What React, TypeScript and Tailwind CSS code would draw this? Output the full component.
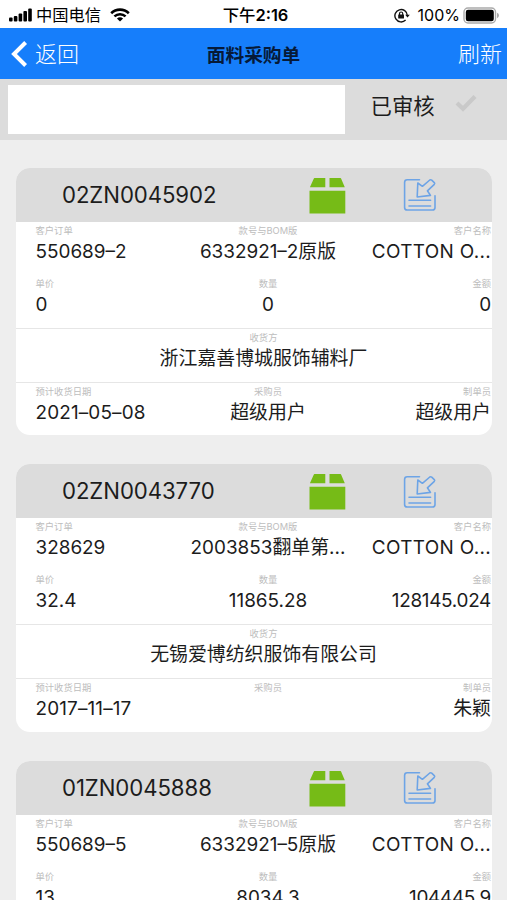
import React from 'react';

type Order = {
  id: string;
  customerOrder: string;
  style: string;
  customer: string;
  price: string;
  qty: string;
  amount: string;
  receiver: string;
  date: string;
  buyer: string;
  maker: string;
};

const orders: Order[] = [
  { id: '02ZN0045902', customerOrder: '550689–2', style: '6332921–2原版', customer: 'COTTON O...', price: '0', qty: '0', amount: '0', receiver: '浙江嘉善博城服饰辅料厂', date: '2021–05–08', buyer: '超级用户', maker: '超级用户' },
  { id: '02ZN0043770', customerOrder: '328629', style: '2003853翻单第...', customer: 'COTTON O...', price: '32.4', qty: '11865.28', amount: '128145.024', receiver: '无锡爱博纺织服饰有限公司', date: '2017–11–17', buyer: '', maker: '朱颖' },
  { id: '01ZN0045888', customerOrder: '550689–5', style: '6332921–5原版', customer: 'COTTON O...', price: '13', qty: '8034.3', amount: '104445.9', receiver: '', date: '', buyer: '', maker: '' },
];

function StatusBar() {
  return (
    <header className="grid h-7 shrink-0 grid-cols-[1fr_auto_1fr] items-center bg-white pt-0.5 text-black">
      <div className="flex items-center pl-[9px]">
        <svg width="23" height="14" viewBox="0 0 23 14">
          <rect x="0" y="9.5" width="3.6" height="4" rx="1" />
          <rect x="4.8" y="8" width="3.6" height="5.5" rx="1" />
          <rect x="9.6" y="5.6" width="3.6" height="7.9" rx="1" />
          <rect x="14.4" y="3" width="3.6" height="10.5" rx="1" />
          <rect x="19.2" y="0.4" width="3.6" height="13.1" rx="1" />
        </svg>
        <span className="ml-1 text-[16.3px] leading-5">中国电信</span>
        <svg className="ml-[9px]" width="20" height="14" viewBox="0 0 20 14" fill="none" stroke="#000">
          <path d="M1.2 5.2a12.6 12.6 0 0 1 17.6 0" strokeWidth="2.6" />
          <path d="M4.4 8.4a8.1 8.1 0 0 1 11.2 0" strokeWidth="2.5" />
          <path d="M10 13.6 6.9 10.6a4.6 4.6 0 0 1 6.2 0z" fill="#000" stroke="none" />
        </svg>
      </div>
      <span className="pl-1 text-[16.4px] font-semibold leading-5"><span className="font-medium">下午</span>2:16</span>
      <div className="flex items-center justify-end pr-[7px]">
        <svg width="16" height="15" viewBox="0 0 16 15" fill="none" stroke="#111" strokeWidth="1.4">
          <path d="M11.6 12A6.2 6.2 0 1 1 13.3 7.5" />
          <path d="M11.2 6.7h4.6L13.5 9.6z" fill="#111" stroke="none" />
          <rect x="4.2" y="6.4" width="5.8" height="4.2" rx=".5" fill="#111" stroke="none" />
          <path d="M5.5 7V5.6a1.6 1.6 0 0 1 3.2 0V7" strokeWidth="1.2" />
        </svg>
        <span className="ml-2 text-[16px] leading-5">100%</span>
        <svg className="ml-[3px]" width="37" height="17" viewBox="0 0 37 17">
          <rect x="1" y="1" width="31.5" height="15" rx="4" fill="#fff" stroke="#aaa" strokeWidth="1.4" />
          <rect x="2.8" y="2.8" width="28" height="11.4" rx="2.2" fill="#000" />
          <path d="M34 5.8q2 .8 2 2.7t-2 2.7z" fill="#aaa" />
        </svg>
      </div>
    </header>
  );
}

function BoxIcon() {
  return (
    <svg width="37" height="37" viewBox="0 0 37 37" fill="#76bb17">
      <path d="M5.5 1h10.8v9.2H0.9L4.5 2.2Q5 1 5.5 1z" />
      <path d="M20.5 1h10.8q.7 0 1.1 1.2l3.4 8H20.5z" />
      <path d="M0.5 13.8h35.8v22.8H0.5z" />
    </svg>
  );
}

function ImportIcon() {
  return (
    <svg width="34" height="34" viewBox="0 0 34 34" fill="none" stroke="#6da4e6" strokeWidth="1.6" strokeLinejoin="round" strokeLinecap="round">
      <path d="M16.5 1.8H4.2Q1.6 1.8 1.6 4.4V29.4Q1.6 32 4.2 32H29.4Q32 32 32 29.4V17.8" />
      <path d="M14.8 5 19.4 8.3 26.8 2Q27.8 1.4 28.7 2.2L31.3 4.6Q32.1 5.4 31.3 6.3L24.4 12.8 27.5 17.4 14.2 19z" />
      <path d="M6 22.2H27.6M6 28H27.6" />
    </svg>
  );
}

type Align = 'left' | 'center' | 'right';
const alignment: Record<Align, string> = { left: 'text-left', center: 'text-center', right: 'text-right' };

function Field({ label, value, align = 'left', tracking = '' }: { label: string; value: string; align?: Align; tracking?: string }) {
  return (
    <div className={`whitespace-nowrap pt-[3px] ${alignment[align]}`}>
      <div className="h-3 text-[9.3px] leading-3 text-[#bdbdbd]">{label}</div>
      <div className={`mt-px h-7 text-[18.9px] leading-7 text-[#1c1c1c] ${tracking}`}>{value}</div>
    </div>
  );
}

const row = 'grid grid-cols-[154.5px_156px_1fr] pl-[19.5px] pr-px';

function OrderCard({ order }: { order: Order }) {
  return (
    <article className="h-[267.67px] shrink-0 overflow-hidden rounded-[14px] bg-white">
      <div className="flex h-[54px] items-center bg-[#dcdcdc] pl-[46px]">
        <h2 className="w-[247px] text-[22.2px] leading-7 tracking-[-0.08px] text-[#1c1c1c]">{order.id}</h2>
        <div className="pt-px"><BoxIcon /></div>
        <div className="ml-[57px] pt-px"><ImportIcon /></div>
      </div>
      <div className={`h-[53px] ${row}`}>
        <Field label="客户订单" value={order.customerOrder} />
        <Field label="款号与BOM版" value={order.style} align="center" />
        <Field label="客户名称" value={order.customer} align="right" tracking="tracking-[0.34px]" />
      </div>
      <div className={`h-[53px] ${row}`}>
        <Field label="单价" value={order.price} />
        <Field label="数量" value={order.qty} align="center" />
        <Field label="金额" value={order.amount} align="right" tracking="tracking-[-0.28px]" />
      </div>
      <div className="h-[55px] border-y border-[#e6e6e6] pl-5 pr-px">
        <Field label="收货方" value={order.receiver} align="center" />
      </div>
      <div className={row}>
        <Field label="预计收货日期" value={order.date} tracking="tracking-[0.15px]" />
        <Field label="采购员" value={order.buyer} align="center" />
        <Field label="制单员" value={order.maker} align="right" />
      </div>
    </article>
  );
}

export default function App() {
  return (
    <div className="flex h-[900px] w-[507px] flex-col overflow-hidden bg-[#eeeeee] font-['Inter','Noto_Sans_CJK_SC',sans-serif]">
      <StatusBar />
      <nav className="grid h-[51px] shrink-0 grid-cols-[1fr_auto_1fr] items-center bg-[#167efb]">
        <div className="flex items-center pl-[11px] text-white">
          <svg width="17" height="26" viewBox="0 0 17 26" fill="none" stroke="#fff" strokeWidth="4">
            <path d="M14.6 1.5 3 13l11.6 11.5" />
          </svg>
          <span className="ml-[7px] text-[22px] font-light leading-8">返回</span>
        </div>
        <h1 className="pt-1 text-[18.7px] font-bold leading-8 text-[#061a38]">面料采购单</h1>
        <span className="pr-[5px] text-right text-[22px] font-light leading-8 text-white">刷新</span>
      </nav>
      <div className="flex h-[61px] shrink-0 items-start bg-[#dcdcdc] pl-2 pt-1.5">
        <div className="h-[48.5px] w-[336.5px] bg-white" />
        <span className="ml-[26px] mt-[5px] text-[21.4px] leading-8 text-[#1c1c1c]">已审核</span>
        <svg className="ml-5 mt-[9px]" width="22" height="18" viewBox="0 0 22 18" fill="none" stroke="#c9c9c9" strokeWidth="4.2">
          <path d="M2 9 8 14.8 20 2.5" />
        </svg>
      </div>
      <main className="flex min-h-0 flex-1 flex-col gap-[29px] overflow-hidden pl-4 pr-[15px] pt-[27.67px]">
        {orders.map((order) => (
          <OrderCard key={order.id} order={order} />
        ))}
      </main>
    </div>
  );
}
